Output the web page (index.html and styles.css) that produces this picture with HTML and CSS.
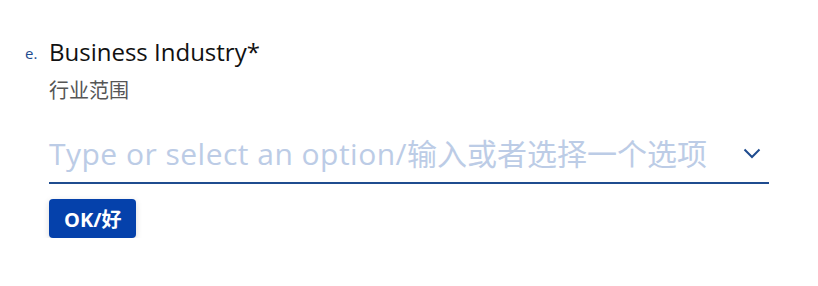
FILE: index.html
```html
<!DOCTYPE html>
<html lang="en">
<head>
<meta charset="utf-8">
<link rel="stylesheet" href="styles.css">
</head>
<body>
<div class="question">
  <div class="num">e.</div>
  <div class="content">
    <div class="title">Business Industry*</div>
    <div class="subtitle">行业范围</div>
    <div class="field">
      <span class="placeholder"><span class="latin">Type or select an option/</span>输入或者选择一个选项</span>
      <svg class="chev" width="18" height="11" viewBox="0 0 18 11"><path d="M1.5 1.5 L9 9 L16.5 1.5" fill="none" stroke="#1f4c8f" stroke-width="2"/></svg>
    </div>
    <button class="ok">OK/好</button>
  </div>
</div>
</body>
</html>
```
FILE: styles.css
```css
html, body {
  margin: 0;
  padding: 0;
  background: #fff;
}
body {
  font-family: "Open Sans", "Noto Sans CJK SC", sans-serif;
}
.question {
  display: flex;
  padding-top: 36px;
}
.num {
  width: 24px;
  padding-left: 25px;
  box-sizing: content-box;
  font-size: 15px;
  color: #1f4c8f;
  line-height: 30px;
  padding-top: 2px;
}
.content {
  width: 720px;
  display: flex;
  flex-direction: column;
  align-items: flex-start;
}
.title {
  font-size: 24px;
  line-height: 32px;
  color: #111;
}
.subtitle {
  font-family: "Noto Sans CJK SC", sans-serif;
  font-size: 20px;
  line-height: 28px;
  margin-top: 8px;
  color: #555;
}
.field {
  margin-top: 20px;
  width: 100%;
  display: flex;
  align-items: center;
  justify-content: space-between;
  border-bottom: 2px solid #1f4c8f;
  height: 60px;
  box-sizing: border-box;
}
.placeholder {
  font-size: 30px;
  color: #bccce6;
  line-height: 46px;
  margin-top: 2px;
}
.latin {
  letter-spacing: 0.48px;
}
.chev {
  margin-right: 8px;
}
.ok {
  margin-top: 15px;
  height: 39px;
  padding: 0 15px;
  border: none;
  border-radius: 4px;
  background: #0541ab;
  color: #fff;
  font-family: "Open Sans", "Noto Sans CJK SC", sans-serif;
  font-weight: 700;
  font-size: 20px;
  box-shadow: 0 2px 6px rgba(0,0,0,0.15);
}
```
